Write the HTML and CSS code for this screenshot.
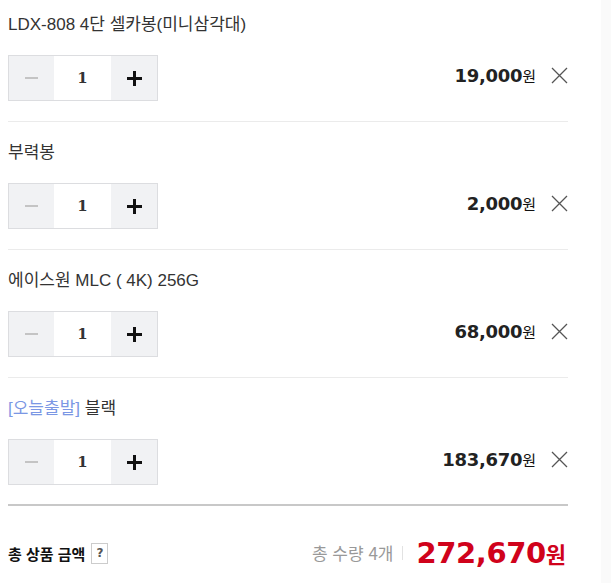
FILE: index.html
```html
<!DOCTYPE html>
<html lang="ko">
<head>
  <meta charset="UTF-8">
  <title>장바구니</title>
  <link rel="stylesheet" href="styles.css">
</head>
<body>
  <div class="page">
    <div class="cart">
      <div class="item first">
        <div class="name">LDX-808 4단 셀카봉(미니삼각대)</div>
        <div class="row">
          <div class="qty">
            <button class="minus"><span></span></button>
            <input type="text" value="1">
            <button class="plus"><span></span></button>
          </div>
          <div class="price"><b>19,000</b>원</div>
          <button class="del"><svg width="17" height="17" viewBox="0 0 17 17"><path d="M1 1L16 16M16 1L1 16" stroke="#555" stroke-width="1.3"/></svg></button>
        </div>
      </div>
      <div class="item">
        <div class="name">부력봉</div>
        <div class="row">
          <div class="qty">
            <button class="minus"><span></span></button>
            <input type="text" value="1">
            <button class="plus"><span></span></button>
          </div>
          <div class="price"><b>2,000</b>원</div>
          <button class="del"><svg width="17" height="17" viewBox="0 0 17 17"><path d="M1 1L16 16M16 1L1 16" stroke="#555" stroke-width="1.3"/></svg></button>
        </div>
      </div>
      <div class="item">
        <div class="name">에이스원 MLC ( 4K) 256G</div>
        <div class="row">
          <div class="qty">
            <button class="minus"><span></span></button>
            <input type="text" value="1">
            <button class="plus"><span></span></button>
          </div>
          <div class="price"><b>68,000</b>원</div>
          <button class="del"><svg width="17" height="17" viewBox="0 0 17 17"><path d="M1 1L16 16M16 1L1 16" stroke="#555" stroke-width="1.3"/></svg></button>
        </div>
      </div>
      <div class="item last">
        <div class="name"><span class="tag">[오늘출발]</span> 블랙</div>
        <div class="row">
          <div class="qty">
            <button class="minus"><span></span></button>
            <input type="text" value="1">
            <button class="plus"><span></span></button>
          </div>
          <div class="price"><b>183,670</b>원</div>
          <button class="del"><svg width="17" height="17" viewBox="0 0 17 17"><path d="M1 1L16 16M16 1L1 16" stroke="#555" stroke-width="1.3"/></svg></button>
        </div>
      </div>
      <div class="total">
        <div class="label">총 상품 금액 <span class="help">?</span></div>
        <div class="count">총 수량 4개</div>
        <div class="sum"><b>272,670</b>원</div>
      </div>
    </div>
    <div class="side"></div>
  </div>
</body>
</html>
```

FILE: styles.css
```css
body { margin: 0; background: #fff; font-family: "Liberation Sans", "Noto Sans CJK KR", sans-serif; color: #333; }
.page { display: flex; min-height: 100vh; }
.cart { width: 560px; margin-left: 8px; }
.side { margin-left: auto; width: 10px; background: #fafafa; }

.item { padding: 20px 0 20px; border-bottom: 1px solid #ebebeb; }
.item.first { padding-top: 14px; }
.item.last { border-bottom: 0; padding-bottom: 19px; }
.name { font-size: 17px; line-height: 22px; color: #333; }
.tag { color: #7b97e4; }

.row { display: flex; align-items: center; margin-top: 19px; }
.qty { display: flex; height: 46px; border: 1px solid #dcdde0; box-sizing: border-box; width: 150px; }
.qty button { border: 0; background: #f1f2f4; padding: 0; display: flex; align-items: center; justify-content: center; }
.qty .minus { width: 45px; }
.qty .plus { width: 46px; }
.qty input { width: 57px; border: 0; padding: 0; text-align: center; font-family: "DejaVu Serif", serif; font-size: 15px; font-weight: bold; color: #333; background: #fff; outline: none; }
.minus span { display: block; width: 13px; height: 2px; background: #c4c4c4; }
.plus span { display: block; width: 15px; height: 15px; position: relative; }
.plus span::before, .plus span::after { content: ""; position: absolute; background: #111; }
.plus span::before { left: 0; top: 6px; width: 15px; height: 3px; }
.plus span::after { left: 6px; top: 0; width: 3px; height: 15px; }

.price { margin-left: auto; font-size: 15px; color: #111; font-family: "Noto Sans CJK KR", sans-serif; line-height: 22px; margin-top: -4px; }
.price b { font-family: "DejaVu Sans", sans-serif; font-size: 18px; letter-spacing: -0.3px; color: #222; }
.del { border: 0; background: none; padding: 0; margin-left: 15px; width: 17px; height: 17px; margin-top: -6px; display: block; }
.del svg { display: block; }

.total { border-top: 2px solid #c8c8c8; padding: 27px 0; height: 40px; display: flex; align-items: center; }
.label { font-family: "Noto Sans CJK KR", sans-serif; font-weight: bold; font-size: 15px; color: #111; display: flex; align-items: center; }
.help { display: inline-flex; width: 15px; height: 19px; border: 1px solid #ccc; margin-left: 6px; align-items: center; justify-content: center; font-family: "DejaVu Sans", sans-serif; font-size: 12px; font-weight: bold; color: #555; }
.count { margin-left: auto; font-family: "Noto Sans CJK KR", sans-serif; font-size: 17px; color: #999; padding-right: 9px; border-right: 1px solid #e2e2e2; line-height: 14px; }
.sum { margin-left: 13px; color: #d0021b; font-family: "Noto Sans CJK KR", sans-serif; font-weight: bold; font-size: 22px; margin-right: 2px; }
.sum b { font-family: "DejaVu Sans", sans-serif; font-size: 29px; letter-spacing: -0.4px; }
```
